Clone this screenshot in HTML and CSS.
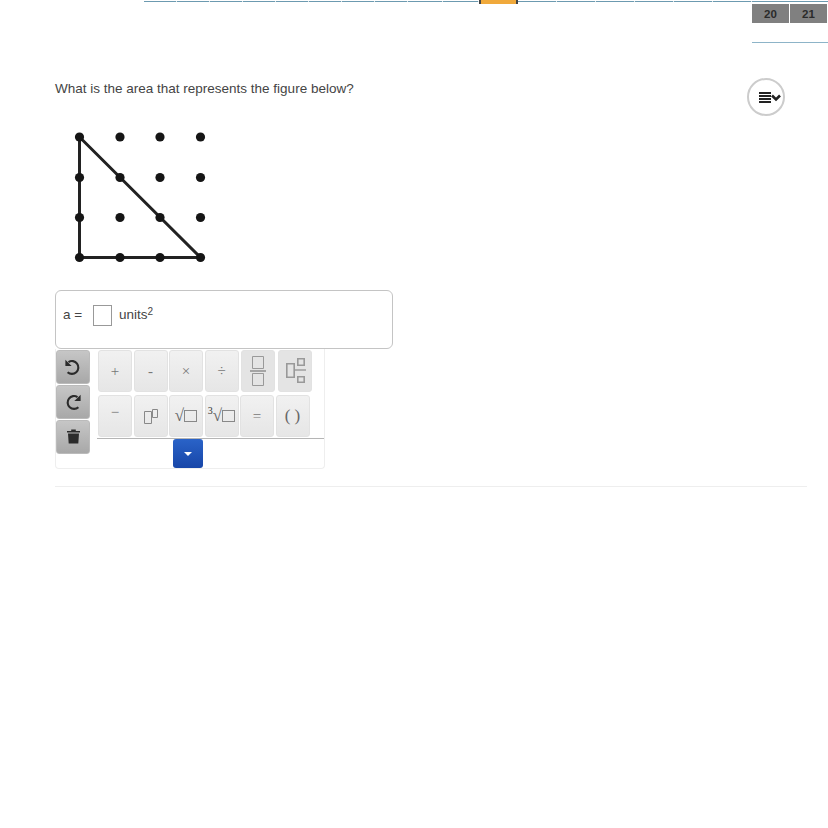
FILE: index.html
```html
<!DOCTYPE html>
<html lang="en">
<head>
    <meta charset="UTF-8">
    <title>Question</title>
    <link rel="stylesheet" href="styles.css">
</head>
<body>
    <div class="top">
        <div class="steps">
            <div class="step"></div><div class="step"></div><div class="step"></div><div class="step"></div><div class="step"></div>
            <div class="step"></div><div class="step"></div><div class="step"></div><div class="step step-wide"></div><div class="step step-wide"></div>
            <div class="step step-current"></div>
            <div class="step step-long"></div><div class="step step-long"></div><div class="step step-long"></div>
            <div class="step step-long"></div><div class="step step-long"></div><div class="step step-long"></div>
        </div>
        <div class="tiles">
            <div class="tile-row">
                <div class="tile">20</div>
                <div class="tile">21</div>
            </div>
            <div class="tile-line"></div>
        </div>
    </div>

    <div class="question">
        <div class="prompt">
            <p>What is the area that represents the figure below?</p>
            <button class="tools-btn" aria-label="Tools">
                <svg width="22" height="12" viewBox="0 0 22 12">
                    <path d="M0 1h12M0 4h12M0 7h12M0 10h12" stroke="#222" stroke-width="1.9" fill="none"/>
                    <path d="M13 3.5l4 4 4-4" stroke="#222" stroke-width="2.6" fill="none"/>
                </svg>
            </button>
        </div>

        <svg class="figure" width="160" height="145" viewBox="55 125 160 145">
            <path d="M79.5 137V257.5H200.5Z" fill="none" stroke="#222" stroke-width="3"/>
            <g fill="#151515">
                <circle cx="79.5" cy="137" r="4.6"/><circle cx="120" cy="137" r="4.6"/><circle cx="160" cy="137" r="4.6"/><circle cx="200.5" cy="137" r="4.6"/>
                <circle cx="79.5" cy="177.5" r="4.6"/><circle cx="120" cy="177.5" r="4.6"/><circle cx="160" cy="177.5" r="4.6"/><circle cx="200.5" cy="177.5" r="4.6"/>
                <circle cx="79.5" cy="217.5" r="4.6"/><circle cx="120" cy="217.5" r="4.6"/><circle cx="160" cy="217.5" r="4.6"/><circle cx="200.5" cy="217.5" r="4.6"/>
                <circle cx="79.5" cy="257.5" r="4.6"/><circle cx="120" cy="257.5" r="4.6"/><circle cx="160" cy="257.5" r="4.6"/><circle cx="200.5" cy="257.5" r="4.6"/>
            </g>
        </svg>

        <div class="answer">
            <span class="answer-label">a =</span>
            <span class="answer-input"></span>
            <span class="answer-unit">units<sup>2</sup></span>
        </div>

        <div class="keyboard">
            <div class="side">
                <button class="side-btn" aria-label="Undo">
                    <svg width="18" height="18" viewBox="0 0 16 16"><path d="M4 3.6A5.7 5.7 0 1 1 3.2 12.6" fill="none" stroke="#2b2b2b" stroke-width="1.9"/><path d="M1.2 1.6v5.6h5.6z" fill="#2b2b2b"/></svg>
                </button>
                <button class="side-btn" aria-label="Redo">
                    <svg width="18" height="18" viewBox="0 0 16 16"><path d="M12 3.6A5.7 5.7 0 1 0 12.8 12.6" fill="none" stroke="#2b2b2b" stroke-width="1.9"/><path d="M14.8 1.6v5.6H9.2z" fill="#2b2b2b"/></svg>
                </button>
                <button class="side-btn" aria-label="Delete">
                    <svg width="13" height="15" viewBox="0 0 13 15"><path d="M0 2h13v1.6H0zM4.2.5h4.6V2H4.2zM1 4.4h11l-.7 10.1H1.7z" fill="#2b2b2b"/></svg>
                </button>
            </div>
            <div class="main">
                <div class="key-rows">
                    <div class="key-row">
                        <button class="key">+</button>
                        <button class="key">-</button>
                        <button class="key">×</button>
                        <button class="key">÷</button>
                        <button class="key key-dark key-gap">
                            <svg width="16" height="32" viewBox="0 0 16 32"><path d="M2.5 1.5h11v12h-11zM2.5 18.5h11v12h-11z" fill="none" stroke="#999"/><path d="M0 16h16" stroke="#888" stroke-width="1.4"/></svg>
                        </button>
                        <button class="key key-dark key-gap">
                            <svg width="24" height="28" viewBox="0 0 24 28"><path d="M3.8 6.8h7.4v13.4H3.8zM14.8 1.8h6.4v6.4h-6.4zM14.8 19.8h6.4v5.4h-6.4z" fill="none" stroke="#999" stroke-width="1.6"/><path d="M11 13h12" stroke="#999" stroke-width="1.4"/></svg>
                        </button>
                    </div>
                    <div class="key-row">
                        <button class="key key-minus">−</button>
                        <button class="key">
                            <svg width="14" height="15" viewBox="0 0 14 15"><path d="M.5 2.5h7v12h-7zM8.5.5h5v8h-5z" fill="none" stroke="#888"/></svg>
                        </button>
                        <button class="key key-serif">√<span class="sq"></span></button>
                        <button class="key key-serif"><sup class="cube">3</sup>√<span class="sq"></span></button>
                        <button class="key">=</button>
                        <button class="key key-serif">( )</button>
                    </div>
                </div>
                <div class="expand-bar">
                    <button class="expand" aria-label="More"><span class="caret"></span></button>
                </div>
            </div>
        </div>

        <hr class="divider">
    </div>
</body>
</html>
```

FILE: styles.css
```css
body {
    margin: 0;
    font-family: "Liberation Sans", Arial, sans-serif;
    color: #444;
    background: #fff;
}
button {
    padding: 0;
    font-family: inherit;
}
.top {
    display: flex;
    height: 43px;
    padding-left: 144px;
}
.steps {
    display: flex;
    width: 608px;
    height: 4px;
}
.step {
    width: 33px;
    height: 1px;
    margin-top: 1px;
    background: #6c9ab0;
    border-right: 1px solid #dfe8ec;
    box-sizing: border-box;
}
.step-wide {
    width: 35.5px;
}
.step-long {
    width: 39px;
}
.step-current {
    width: 40px;
    height: 4px;
    margin-top: 0;
    background: #f0a93b;
    border-left: 2px solid #444;
    border-right: 2px solid #444;
}
.tiles {
    width: 76px;
    border-top: 1px solid #6c9ab0;
    margin-top: 1px;
    height: 41px;
}
.tile-row {
    display: flex;
    gap: 1px;
    margin-top: 2px;
}
.tile {
    width: 37px;
    height: 19px;
    background: #808080;
    color: #2b2b2b;
    font-size: 11.5px;
    font-weight: bold;
    line-height: 21px;
    text-align: center;
}
.tile-line {
    height: 1px;
    margin-top: 19px;
    background: #8db4c8;
}
.question {
    padding: 0 21px 0 55px;
}
.prompt {
    display: flex;
    justify-content: space-between;
    align-items: flex-start;
    height: 82px;
    padding-right: 22px;
}
.prompt p {
    margin: 38px 0 0;
    font-size: 13.5px;
    line-height: 16px;
}
.tools-btn {
    display: flex;
    align-items: center;
    justify-content: center;
    width: 38px;
    height: 38px;
    margin-top: 35px;
    padding: 2px 0 0 7px;
    background: #fff;
    border: 2px solid #ccc;
    border-radius: 50%;
}
.figure {
    display: block;
}
.answer {
    display: flex;
    align-items: flex-start;
    box-sizing: border-box;
    width: 338px;
    height: 59px;
    margin-top: 20px;
    padding: 14px 7px 0;
    border: 1px solid #c4c4c4;
    border-radius: 6px;
    font-size: 13.5px;
    line-height: 20px;
}
.answer-label {
    width: 30px;
}
.answer-input {
    width: 19px;
    height: 21px;
    box-sizing: border-box;
    border: 1px solid #999;
}
.answer-unit {
    margin-left: 7px;
}
.answer-unit sup {
    font-size: 10px;
    line-height: 0;
    vertical-align: 4px;
}
.keyboard {
    display: flex;
    box-sizing: border-box;
    width: 270px;
    height: 120px;
    padding-top: 1px;
    border: 1px solid #eee;
    border-top: none;
    border-radius: 0 0 4px 4px;
}
.side {
    display: flex;
    flex-direction: column;
    gap: 1.5px;
    width: 41px;
}
.side-btn {
    display: flex;
    align-items: center;
    justify-content: center;
    width: 34px;
    height: 33.5px;
    background: linear-gradient(#c6c6c6, #a8a8a8);
    border: 1px solid #bbb;
    border-radius: 3px;
}
.main {
    flex: 1;
}
.key-rows {
    display: flex;
    flex-direction: column;
    gap: 3px;
    height: 88px;
    padding-left: 1px;
    border-bottom: 1px solid #b5b5b5;
}
.key-row {
    display: flex;
    gap: 1.5px;
}
.key {
    display: flex;
    align-items: center;
    justify-content: center;
    width: 34px;
    height: 42px;
    background: linear-gradient(#f1f1f1, #e6e6e6);
    border: 1px solid #e2e2e2;
    border-radius: 3px;
    color: #777;
    font-family: "Liberation Serif", serif;
    font-size: 15px;
}
.key-dark {
    background: #e4e4e4;
}
.key-gap {
    margin-left: 1px;
}
.key-minus {
    padding-bottom: 7px;
}
.key-serif {
    font-size: 17px;
    color: #666;
}
.sq {
    display: inline-block;
    width: 13px;
    height: 12px;
    box-sizing: border-box;
    border: 1px solid #888;
}
.cube {
    font-size: 10px;
    line-height: 0;
    margin-top: -10px;
    color: #333;
}
.expand-bar {
    padding-left: 76px;
}
.expand {
    display: flex;
    align-items: center;
    justify-content: center;
    width: 30px;
    height: 29px;
    background: linear-gradient(#2a63c8, #1746a8);
    border: none;
    border-radius: 3px;
}
.caret {
    border-top: 4px solid #fff;
    border-left: 4px solid transparent;
    border-right: 4px solid transparent;
}
.divider {
    height: 1px;
    margin: 17px 0 0;
    background: #eee;
    border: none;
}
```
